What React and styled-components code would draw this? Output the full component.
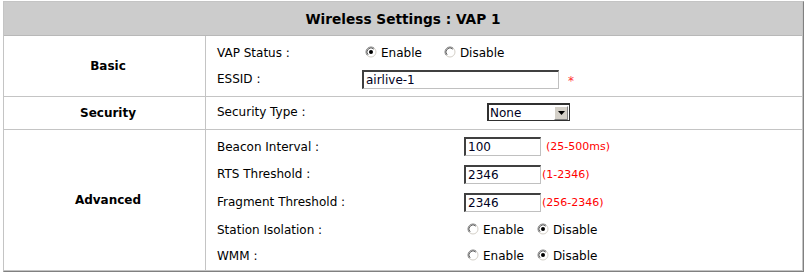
import React from "react";
import styled, { createGlobalStyle } from "styled-components";

const GlobalStyle = createGlobalStyle`
  html, body {
    margin: 0;
    padding: 0;
    background: #ffffff;
  }
  body {
    font-family: "DejaVu Sans", Verdana, sans-serif;
    font-size: 12px;
    color: #000000;
  }
`;

const Frame = styled.div`
  margin: 1px 0 0 3px;
  width: 801px;
  box-sizing: border-box;
  border: 1px solid;
  border-color: #c4c4c4 #808080 #808080 #c4c4c4;
`;

const Inner = styled.div`
  border-right: 1px solid #c4c4c4;
  border-bottom: 1px solid #c4c4c4;
`;

const Header = styled.div`
  height: 33px;
  background: #cccccc;
  border-bottom: 1px solid #b8b8b8;
  display: flex;
  align-items: center;
  justify-content: center;
  font-weight: bold;
  font-size: 13.7px;
  color: #000000;
`;

const Section = styled.div`
  display: grid;
  grid-template-columns: 202px 1fr;
  height: ${(p) => p.$height}px;
  border-top: ${(p) => (p.$first ? "none" : "1px solid #c4c4c4")};
`;

const SectionTitle = styled.div`
  display: flex;
  align-items: center;
  justify-content: center;
  padding-left: 7px;
  font-weight: bold;
  border-right: 1px solid #c4c4c4;
`;

const Fields = styled.div`
  display: grid;
  grid-template-columns: ${(p) => p.$labelWidth}px 1fr;
  grid-template-rows: ${(p) => p.$rows};
  align-content: start;
  align-items: center;
  padding: ${(p) => p.$padTop}px 0 0 11px;
`;

const Label = styled.div`
  white-space: nowrap;
`;

const Value = styled.div`
  display: flex;
  align-items: center;
  white-space: nowrap;
`;

const TextBox = styled.div`
  box-sizing: border-box;
  width: ${(p) => p.$width}px;
  height: 19px;
  border-style: solid;
  border-width: 2px 1px 1px 2px;
  border-color: #404040 #c0c0c0 #c0c0c0 #404040;
  padding-left: 2px;
  display: flex;
  align-items: center;
  color: #000022;
  font-size: 12px;
  background: #ffffff;
`;

const Hint = styled.span`
  color: #ff0000;
  font-size: 11px;
  margin-left: ${(p) => p.$gap}px;
`;

const Star = styled.span`
  color: #ff3333;
  font-size: 12px;
  margin-left: 9px;
  padding-top: 3px;
`;

const Option = styled.label`
  display: flex;
  align-items: center;
  margin-right: ${(p) => p.$after}px;
`;

const RadioMark = styled.svg`
  width: 12px;
  height: 12px;
  margin: 0 4px 2px 3px;
  flex: none;
`;

const SelectBox = styled.div`
  box-sizing: border-box;
  width: 83px;
  height: 18px;
  border: 1px solid #303030;
  border-top-width: 2px;
  border-left-width: 2px;
  display: flex;
  align-items: center;
  justify-content: space-between;
  background: #ffffff;
  padding-left: 1px;
  color: #000022;
`;

const ArrowButton = styled.div`
  box-sizing: border-box;
  width: 14px;
  height: 14px;
  margin-right: 1px;
  background: #d4d0c8;
  border-style: solid;
  border-width: 1px;
  border-color: #ffffff #808080 #808080 #ffffff;
  display: flex;
  align-items: center;
  justify-content: center;
`;

const Radio = ({ checked, children, after = 0 }) => (
  <Option $after={after}>
    <RadioMark viewBox="0 0 12 12">
      <circle cx="6" cy="6" r="5" fill="#ffffff" />
      <path d="M2.46 9.54 A5 5 0 0 1 9.54 2.46" fill="none" stroke="#808080" strokeWidth="1" />
      <path d="M9.54 2.46 A5 5 0 0 1 2.46 9.54" fill="none" stroke="#d4d0c8" strokeWidth="1" />
      <path d="M3.17 8.83 A4 4 0 0 1 8.83 3.17" fill="none" stroke="#404040" strokeWidth="0.8" />
      {checked && <circle cx="6" cy="6" r="2" fill="#000000" />}
    </RadioMark>
    {children}
  </Option>
);

const EnableDisable = ({ enabled, gap }) => (
  <Value>
    <Radio checked={enabled} after={gap}>Enable</Radio>
    <Radio checked={!enabled}>Disable</Radio>
  </Value>
);

const App = () => (
  <>
    <GlobalStyle />
    <Frame>
      <Inner>
        <Header>Wireless Settings : VAP 1</Header>

        <Section $first $height={60}>
          <SectionTitle>Basic</SectionTitle>
          <Fields $labelWidth={145} $rows="26px 26px" $padTop={4}>
            <Label>VAP Status :</Label>
            <EnableDisable enabled gap={19} />
            <Label>ESSID :</Label>
            <Value>
              <TextBox $width={197}>airlive-1</TextBox>
              <Star>*</Star>
            </Value>
          </Fields>
        </Section>

        <Section $height={32}>
          <SectionTitle>Security</SectionTitle>
          <Fields $labelWidth={270} $rows="26px" $padTop={2}>
            <Label>Security Type :</Label>
            <Value>
              <SelectBox>
                <span>None</span>
                <ArrowButton>
                  <svg width="7" height="4" viewBox="0 0 7 4">
                    <path d="M0 0 H7 L3.5 4 Z" fill="#000000" />
                  </svg>
                </ArrowButton>
              </SelectBox>
            </Value>
          </Fields>
        </Section>

        <Section $height={140}>
          <SectionTitle>Advanced</SectionTitle>
          <Fields $labelWidth={247} $rows="27px 28px 28px 27px 26px" $padTop={3}>
            <Label>Beacon Interval :</Label>
            <Value>
              <TextBox $width={77}>100</TextBox>
              <Hint $gap={5}>(25-500ms)</Hint>
            </Value>
            <Label>RTS Threshold :</Label>
            <Value>
              <TextBox $width={77}>2346</TextBox>
              <Hint $gap={1}>(1-2346)</Hint>
            </Value>
            <Label>Fragment Threshold :</Label>
            <Value>
              <TextBox $width={77}>2346</TextBox>
              <Hint $gap={1}>(256-2346)</Hint>
            </Value>
            <Label>Station Isolation :</Label>
            <EnableDisable enabled={false} gap={10} />
            <Label>WMM :</Label>
            <EnableDisable enabled={false} gap={10} />
          </Fields>
        </Section>
      </Inner>
    </Frame>
  </>
);

export default App;
